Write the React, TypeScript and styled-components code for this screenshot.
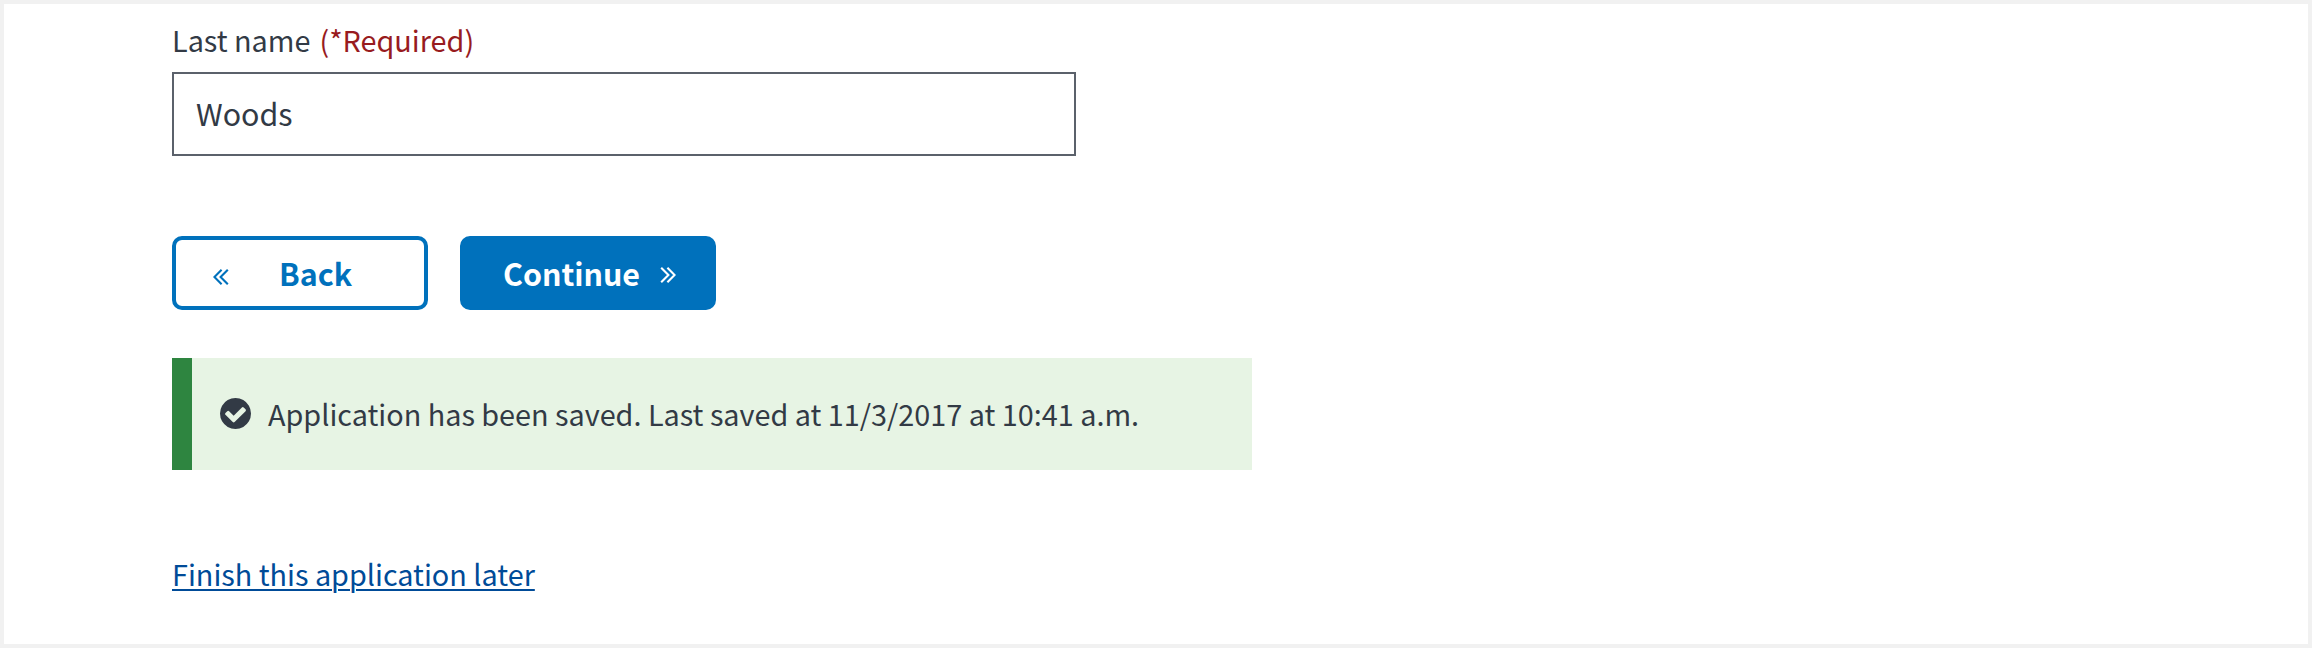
import React from 'react';
import styled, { createGlobalStyle } from 'styled-components';

const colors = {
  ink: '#323a45',
  primary: '#0071bc',
  link: '#004b98',
  danger: '#981b1e',
  success: '#2e8540',
  successTint: '#e7f4e4',
};

const GlobalStyle = createGlobalStyle`
  *, *::before, *::after { box-sizing: border-box; }
  body {
    margin: 0;
    background: #fff;
    color: ${colors.ink};
    font-family: "Source Sans Pro", "Noto Sans CJK SC", sans-serif;
    font-size: 28.8px;
    line-height: 40px;
  }
`;

const Page = styled.main`
  display: flex;
  flex-direction: column;
  align-items: flex-start;
  width: 100%;
  height: 648px;
  padding: 16px 168px 0;
  border: 4px solid #f1f1f1;
  overflow: hidden;
`;

const Field = styled.div`
  display: flex;
  flex-direction: column;
  gap: 12px;
`;

const Label = styled.label`
  display: flex;
  white-space: nowrap;
`;

const Required = styled.span`
  margin-left: 9px;
  color: ${colors.danger};
`;

const TextInput = styled.input`
  width: 904px;
  height: 84px;
  padding: 0 22px 2px;
  border: 2px solid #5b616b;
  border-radius: 0;
  outline: none;
  background: #fff;
  color: ${colors.ink};
  font: inherit;
  font-size: 30.4px;
`;

const Actions = styled.div`
  display: flex;
  gap: 32px;
  margin-top: 80px;
`;

const Button = styled.button<{ $outline?: boolean }>`
  display: flex;
  align-items: center;
  width: 256px;
  height: 74px;
  padding: ${({ $outline }) => ($outline ? '0 0 0 37px' : '0 0 0 39px')};
  border: 4px solid ${colors.primary};
  border-radius: 10px;
  background: ${({ $outline }) => ($outline ? '#fff' : colors.primary)};
  color: ${({ $outline }) => ($outline ? colors.primary : '#fff')};
  font: inherit;
  font-size: 30.4px;
  font-weight: 700;
  white-space: nowrap;
`;

const Chevrons = styled.svg<{ $before?: boolean }>`
  flex: none;
  width: 16px;
  height: 18px;
  margin: ${({ $before }) => ($before ? '12px 50px 4px 0' : '8px 0 4px 20px')};
  fill: none;
  stroke: currentColor;
  stroke-width: 2.1;
`;

const Alert = styled.div`
  display: flex;
  align-items: center;
  width: 1080px;
  height: 112px;
  margin-top: 48px;
  padding-left: 28px;
  border-left: 20px solid ${colors.success};
  background: ${colors.successTint};
`;

const CheckIcon = styled.svg`
  flex: none;
  width: 31px;
  height: 31px;
  margin: 0 17px 2px 0;
  fill: ${colors.ink};
`;

const AlertText = styled.p`
  margin: 0;
  white-space: nowrap;
`;

const LaterLink = styled.a`
  margin-top: 84px;
  color: ${colors.link};
  text-decoration: underline;
  text-decoration-thickness: 2px;
  text-underline-offset: 3px;
  white-space: nowrap;
`;

export default function App() {
  return (
    <>
      <GlobalStyle />
      <Page>
        <Field>
          <Label htmlFor="last-name">
            <span>Last name</span>
            <Required>(*Required)</Required>
          </Label>
          <TextInput id="last-name" type="text" defaultValue="Woods" />
        </Field>
        <Actions>
          <Button type="button" $outline>
            <Chevrons $before viewBox="0 0 16 18" aria-hidden="true">
              <path d="M8.6 1.7 1.4 9l7.2 7.3M14.8 1.7 7.6 9l7.2 7.3" />
            </Chevrons>
            Back
          </Button>
          <Button type="button">
            Continue
            <Chevrons viewBox="0 0 16 18" aria-hidden="true">
              <path d="M1.2 1.7 8.4 9l-7.2 7.3M7.4 1.7 14.6 9l-7.2 7.3" />
            </Chevrons>
          </Button>
        </Actions>
        <Alert role="status">
          <CheckIcon viewBox="0 0 1536 1536" aria-hidden="true">
            <path
              fillRule="evenodd"
              d="M1284 606q0-28-18-46l-91-90q-19-19-45-19t-45 19L677 877 451 651q-19-19-45-19t-45 19l-91 90q-18 18-18 46 0 27 18 45l362 362q19 19 45 19 27 0 46-19l543-543q18-18 18-45zM1536 768q0 209-103 385.5T1153.5 1433 768 1536 382.5 1433 103 1153.5 0 768 103 382.5 382.5 103 768 0t385.5 103T1433 382.5 1536 768z"
            />
          </CheckIcon>
          <AlertText>Application has been saved. Last saved at 11/3/2017 at 10:41 a.m.</AlertText>
        </Alert>
        <LaterLink href="#">Finish this application later</LaterLink>
      </Page>
    </>
  );
}
